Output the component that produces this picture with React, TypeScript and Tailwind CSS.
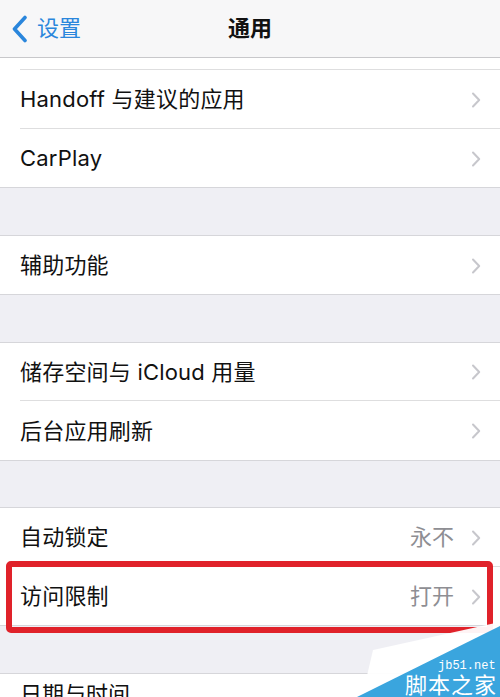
import React from "react";

const FONT = {
  fontFamily:
    '"Inter", "Noto Sans CJK SC", "Noto Sans", sans-serif',
};

function Chevron() {
  return (
    <svg width="10" height="16" viewBox="0 0 10 16" className="shrink-0">
      <path d="M2 1.5 L8.2 8 L2 14.5" fill="none" stroke="#c7c7cc" strokeWidth="2" strokeLinecap="round" strokeLinejoin="round" />
    </svg>
  );
}

function Row({ label, value, last }: { label: string; value?: string; last?: boolean }) {
  return (
    <div className="bg-white pl-5">
      <div
        className={
          "h-[58.5px] flex items-center pr-[19px] pt-[2px] " +
          (last ? "" : "border-b border-[#dededf]")
        }
      >
        <span className="flex-1 text-[22px] text-[#111] tracking-[0.2px]">{label}</span>
        {value && <span className="text-[22px] text-[#8e8e93] mr-[17px]">{value}</span>}
        <Chevron />
      </div>
    </div>
  );
}

function Group({ children }: { children: React.ReactNode }) {
  return <div className="border-y border-[#d6d6da]">{children}</div>;
}

function Gap() {
  return <div className="h-[46.5px]" />;
}

export default function App() {
  return (
    <div className="relative w-[500px] h-[697px] overflow-hidden bg-[#efeff4]" style={FONT}>
      <header className="h-[58px] bg-[#f7f7f8] border-b border-[#c8c8cb] flex items-center relative">
        <div className="flex items-center pl-[11px] gap-[9px] text-[#2a86dc]">
          <svg width="17" height="28" viewBox="0 0 17 28">
            <path d="M14 2.5 L3.5 14 L14 25.5" fill="none" stroke="#2a86dc" strokeWidth="3.6" strokeLinecap="round" strokeLinejoin="round" />
          </svg>
          <span className="text-[22px]">设置</span>
        </div>
        <div className="absolute inset-x-0 top-0 h-[57px] flex items-center justify-center pointer-events-none">
          <span className="text-[22px] font-semibold text-[#111]">通用</span>
        </div>
      </header>

      <div className="bg-white pl-5">
        <div className="h-[12px] border-b border-[#dededf]" />
      </div>
      <div className="border-b border-[#d6d6da]">
        <Row label="Handoff 与建议的应用" />
        <Row label="CarPlay" last />
      </div>
      <Gap />
      <Group>
        <Row label="辅助功能" last />
      </Group>
      <Gap />
      <Group>
        <Row label="储存空间与 iCloud 用量" />
        <Row label="后台应用刷新" last />
      </Group>
      <Gap />
      <Group>
        <Row label="自动锁定" value="永不" />
        <Row label="访问限制" value="打开" last />
      </Group>
      <Gap />
      <div className="border-t border-[#d6d6da] bg-white pl-5 h-[60px]">
        <div className="h-[42px] flex items-center">
          <span className="text-[22px] text-[#111]">日期与时间</span>
        </div>
      </div>

      {/* red highlight box */}
      <div className="absolute left-[6px] top-[561px] w-[487px] h-[72px] border-[6px] border-[#e0222a] rounded-[5px]" />

      {/* watermark */}
      <div className="absolute left-[340px] top-[615px] w-[160px] h-[82px]">
        <svg width="160" height="82" viewBox="0 0 160 82" className="absolute inset-0">
          <polygon points="22,82 33,35 160,7 160,82" fill="#ffffff" fillOpacity="0.95" />
          <polygon points="17,82 160,11 160,82" fill="#3aa5de" />
        </svg>
        <div
          className="absolute left-[98px] top-[45px] text-[12px] leading-none text-white"
          style={{ fontFamily: '"Liberation Mono", "DejaVu Sans Mono", monospace' }}
        >
          jb51.net
        </div>
        <div className="absolute left-[65px] top-[59px] text-[22px] leading-none text-white whitespace-nowrap tracking-[1px]">
          脚本之家
        </div>
      </div>
    </div>
  );
}
